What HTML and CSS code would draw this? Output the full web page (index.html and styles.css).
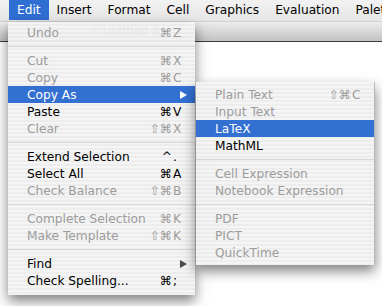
FILE: index.html
```html
<!DOCTYPE html>
<html lang="en">
<head>
    <meta charset="UTF-8">
    <title>Edit menu - Copy As</title>
    <link rel="stylesheet" href="styles.css">
</head>
<body>
    <div class="screen">
        <div class="menubar">
            <span class="menubar-item open">Edit</span>
            <span class="menubar-item">Insert</span>
            <span class="menubar-item">Format</span>
            <span class="menubar-item">Cell</span>
            <span class="menubar-item">Graphics</span>
            <span class="menubar-item">Evaluation</span>
            <span class="menubar-item">Palettes</span>
        </div>

        <div class="window">
            <div class="titlebar"><span class="doc-icon">&#10035;</span>Untitled-6</div>
            <div class="content"></div>
        </div>

        <!-- Edit menu -->
        <div class="menu edit-menu">
            <div class="item disabled"><span class="label">Undo</span><span class="mods">&#8984;</span><span class="key">Z</span></div>
            <div class="sep"></div>
            <div class="item disabled"><span class="label">Cut</span><span class="mods">&#8984;</span><span class="key">X</span></div>
            <div class="item disabled"><span class="label">Copy</span><span class="mods">&#8984;</span><span class="key">C</span></div>
            <div class="item selected"><span class="label">Copy As</span><span class="arrow"></span></div>
            <div class="item"><span class="label">Paste</span><span class="mods">&#8984;</span><span class="key">V</span></div>
            <div class="item disabled"><span class="label">Clear</span><span class="mods">&#8679;&#8984;</span><span class="key">X</span></div>
            <div class="sep"></div>
            <div class="item"><span class="label">Extend Selection</span><span class="mods">^</span><span class="key">.</span></div>
            <div class="item"><span class="label">Select All</span><span class="mods">&#8984;</span><span class="key">A</span></div>
            <div class="item disabled"><span class="label">Check Balance</span><span class="mods">&#8679;&#8984;</span><span class="key">B</span></div>
            <div class="sep"></div>
            <div class="item disabled"><span class="label">Complete Selection</span><span class="mods">&#8984;</span><span class="key">K</span></div>
            <div class="item disabled"><span class="label">Make Template</span><span class="mods">&#8679;&#8984;</span><span class="key">K</span></div>
            <div class="sep"></div>
            <div class="item"><span class="label">Find</span><span class="arrow"></span></div>
            <div class="item"><span class="label">Check Spelling...</span><span class="mods">&#8984;</span><span class="key">;</span></div>
        </div>

        <!-- Copy As submenu -->
        <div class="menu submenu">
            <div class="item disabled"><span class="label">Plain Text</span><span class="mods">&#8679;&#8984;</span><span class="key">C</span></div>
            <div class="item disabled"><span class="label">Input Text</span></div>
            <div class="item selected"><span class="label">LaTeX</span></div>
            <div class="item"><span class="label">MathML</span></div>
            <div class="sep"></div>
            <div class="item disabled"><span class="label">Cell Expression</span></div>
            <div class="item disabled"><span class="label">Notebook Expression</span></div>
            <div class="sep"></div>
            <div class="item disabled"><span class="label">PDF</span></div>
            <div class="item disabled"><span class="label">PICT</span></div>
            <div class="item disabled"><span class="label">QuickTime</span></div>
        </div>
    </div>
</body>
</html>
```

FILE: styles.css
```css
body {
    margin: 0;
    background-color: #fff;
    font-family: "DejaVu Sans", "Lucida Grande", sans-serif;
    font-size: 12.2px;
}
.screen {
    position: relative;
    width: 382px;
    height: 306px;
    overflow: hidden;
    background-color: #fff;
}
.menubar {
    display: flex;
    height: 21px;
    padding-left: 9px;
    background: linear-gradient(#f2f2f2, #e6e6e6);
    border-bottom: 1px solid #cfcfcf;
    white-space: nowrap;
}
.menubar-item {
    padding: 0 8px;
    line-height: 20px;
    height: 20px;
    color: #000;
}
.menubar-item.open {
    background-color: #2f6fd3;
    color: #fff;
}
.window {
    display: flex;
    flex-direction: column;
}
.titlebar {
    height: 19px;
    line-height: 19px;
    padding-left: 90px;
    background: linear-gradient(#ededed, #c2c2c2);
    border-bottom: 1px solid #3c3c3c;
    color: #333;
    font-size: 11.5px;
}
.doc-icon {
    color: #e8602a;
    margin-right: 3px;
}
.content {
    height: 270px;
    background-color: #fff;
}
.menu {
    position: absolute;
    box-sizing: border-box;
    background: repeating-linear-gradient(rgba(244, 244, 244, 0.95) 0 2px, rgba(236, 236, 236, 0.95) 2px 4px);
    box-shadow: 0 6px 12px rgba(0, 0, 0, 0.5);
}
.edit-menu {
    left: 8px;
    top: 22px;
    width: 187px;
    padding: 2px 0 6px;
}
.submenu {
    left: 196px;
    top: 82px;
    width: 179px;
    padding: 4px 0;
    border-right: 1px solid #b8b8b8;
}
.item {
    display: flex;
    align-items: center;
    height: 17px;
    padding: 0 12px 0 19px;
    color: #000;
    white-space: nowrap;
}
.item.disabled {
    color: #9c9c9c;
}
.item.selected {
    background-color: #3270d2;
    color: #fff;
}
.label {
    flex: 1;
}
.mods {
    text-align: right;
}
.key {
    display: inline-block;
    width: 10px;
    margin-left: 1px;
}
.arrow {
    width: 0;
    height: 0;
    margin-right: -4px;
    border-top: 4.5px solid transparent;
    border-bottom: 4.5px solid transparent;
    border-left: 7px solid #4a4a4a;
}
.selected .arrow {
    border-left-color: #fff;
}
.sep {
    height: 11px;
    display: flex;
    align-items: center;
}
.sep::after {
    content: "";
    flex: 1;
    height: 1px;
    background-color: #d6d6d6;
}
```
